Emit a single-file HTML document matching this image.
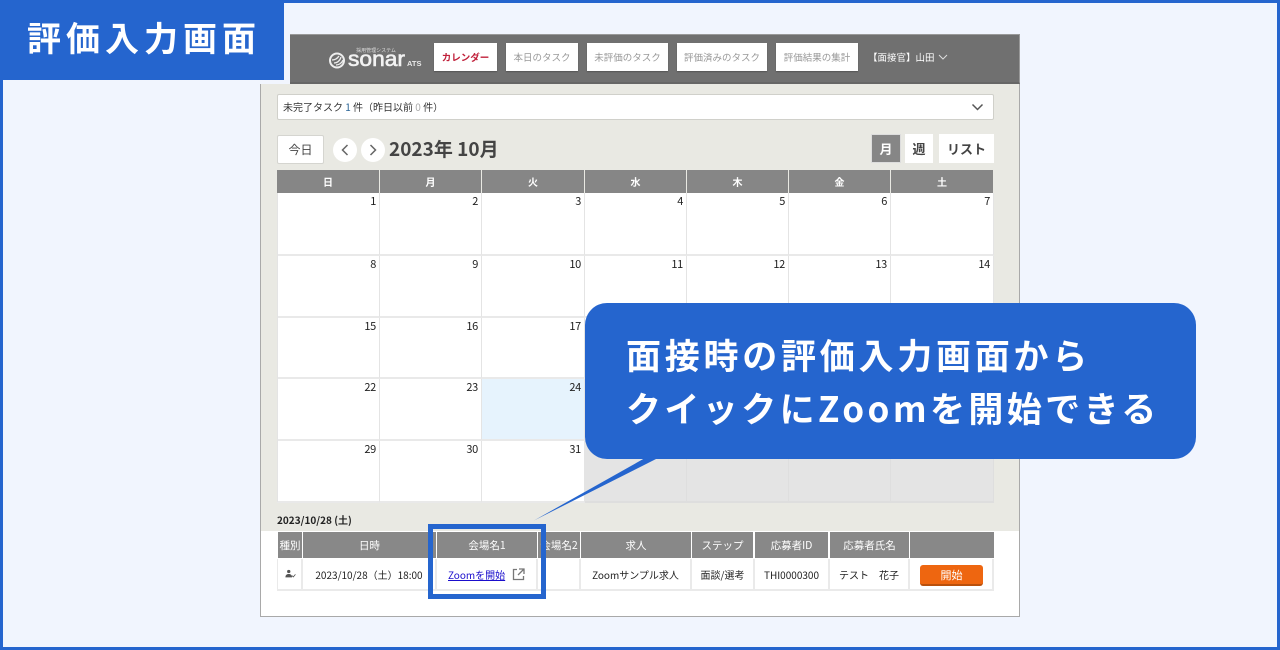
<!DOCTYPE html>
<html lang="ja"><head><meta charset="utf-8"><title>評価入力画面</title>
<style>
*{box-sizing:border-box;margin:0;padding:0}
html,body{width:1280px;height:650px;overflow:hidden}
body{position:relative;background:#F1F5FE;font-family:"Noto Sans CJK JP","Liberation Sans",sans-serif;color:#333}
.a{position:absolute}
.c{display:flex;align-items:center;justify-content:center;white-space:nowrap}
#frame{left:0;top:0;width:1280px;height:650px;border:3px solid #2565CE}
#panel{left:260px;top:84px;width:760px;height:533px;background:#fff;border:1px solid #a9a9a9;border-top:0}
#body{left:261px;top:84px;width:758px;height:447px;background:#E9E9E3}
#head{left:290px;top:34px;width:730px;height:50px;background:#707070;border:1px solid #999;border-width:1px 1px 2px 0;border-bottom-color:#666}
.tab{top:43px;height:28px;background:#fff;font-size:9.500px;color:#999;box-shadow:0 1px 1px #555}
#bar{left:277px;top:94px;width:717px;height:26px;background:#fff;border:1px solid #d0d0ca;border-radius:2px;font-size:10px;line-height:24px;padding-left:5px;color:#333}
.th{top:170px;height:23px;background:#868686;color:#fff;font-size:10px;font-weight:700}
.cell{background:#fff;border-right:1px solid #e4e4e4;border-bottom:2px solid #e9e9e9;text-align:right;font-size:11px;line-height:14px;padding:1px 3px 0 0;color:#222;letter-spacing:-.3px}
.g{background:#E4E4E4;border-color:#dedede}
.h2{top:532px;height:26px;background:#888;color:#fff;font-size:10.500px}
.td{top:559px;height:32px;background:#fff;border-bottom:2px solid #eaeaea;border-right:2px solid #eaeaea;font-size:10px;color:#222}
</style></head><body>
<div class="a" id="panel"></div>
<div class="a" id="body"></div>
<div class="a" id="head"></div>

<svg class="a" style="left:325px;top:44px" width="105" height="30" viewBox="0 0 105 30">
<circle cx="12" cy="16.500" r="7" fill="none" stroke="#eee" stroke-width="2"/>
<path d="M9 19c3 0 6-2 7-6M7 16c3 0 5-1 7-4M11 21c3 0 6-2 7-5" fill="none" stroke="#eee" stroke-width="1.300"/>
<text x="51" y="8" font-size="5" fill="#ddd" text-anchor="middle" font-family="'Noto Sans CJK JP',sans-serif">採用管理システム</text>
<text x="23" y="22" font-size="21" fill="#f2f2f2" stroke="#f2f2f2" stroke-width=".6" textLength="57" lengthAdjust="spacingAndGlyphs" font-family="'Liberation Sans',sans-serif">sonar</text>
<text x="82" y="22" font-size="7.500" font-weight="700" fill="#e8e8e8" font-family="'Liberation Sans',sans-serif">ATS</text>
</svg>

<div class="a c tab" style="left:434px;width:63px;color:#C0203A;font-weight:700">カレンダー</div>
<div class="a c tab" style="left:506px;width:72px">本日のタスク</div>
<div class="a c tab" style="left:587px;width:81px">未評価のタスク</div>
<div class="a c tab" style="left:677px;width:90px">評価済みのタスク</div>
<div class="a c tab" style="left:776px;width:82px">評価結果の集計</div>
<div class="a" style="left:868px;top:50px;font-size:9.500px;line-height:14px;color:#fff;white-space:nowrap">【面接官】山田</div>
<svg class="a" style="left:938px;top:54px" width="10" height="7"><path d="M1 1l4 4 4-4" fill="none" stroke="#ddd" stroke-width="1"/></svg>

<div class="a" id="bar">未完了タスク <span style="color:#2a6496">1</span> 件（昨日以前 <span style="color:#aaa">0</span> 件）</div>
<svg class="a" style="left:971px;top:103px" width="13" height="9"><path d="M1.500 1.500l5 5 5-5" fill="none" stroke="#555" stroke-width="1.500"/></svg>

<div class="a c" style="left:277px;top:135px;width:47px;height:29px;background:#fff;border:1px solid #d5d5d0;border-radius:2px;font-size:12px;color:#444">今日</div>
<div class="a" style="left:333px;top:138px;width:24px;height:24px;border-radius:50%;background:#fff"></div>
<div class="a" style="left:361px;top:138px;width:24px;height:24px;border-radius:50%;background:#fff"></div>
<svg class="a" style="left:333px;top:138px" width="52" height="24"><path d="M14.500 7l-5 5 5 5M37.500 7l5 5-5 5" fill="none" stroke="#666" stroke-width="1.500"/></svg>
<div class="a" style="left:389px;top:134px;font-size:19px;line-height:29px;font-weight:700;color:#444;white-space:nowrap">2023年 10月</div>
<div class="a c" style="left:871px;top:134px;width:30px;height:29px;background:#868686;color:#fff;font-size:13px;font-weight:700;border:1px solid #ddd">月</div>
<div class="a c" style="left:905px;top:134px;width:28px;height:29px;background:#fff;color:#444;font-size:13px;font-weight:700">週</div>
<div class="a c" style="left:939px;top:134px;width:55px;height:29px;background:#fff;color:#444;font-size:13px;font-weight:700">リスト</div>

<div class="a c th" style="left:277px;width:102px">日</div>
<div class="a c th" style="left:380px;width:101px">月</div>
<div class="a c th" style="left:482px;width:102px">火</div>
<div class="a c th" style="left:585px;width:101px">水</div>
<div class="a c th" style="left:687px;width:101px">木</div>
<div class="a c th" style="left:789px;width:101px">金</div>
<div class="a c th" style="left:891px;width:102px">土</div>

<div class="a" style="left:277px;top:193px;width:717px;height:310px;display:grid;grid-template-columns:103px 102px 103px 102px 102px 102px 103px;grid-template-rows:63px 62px 61px 62px 62px;">
<div class="cell">1</div><div class="cell">2</div><div class="cell">3</div><div class="cell">4</div><div class="cell">5</div><div class="cell">6</div><div class="cell">7</div>
<div class="cell">8</div><div class="cell">9</div><div class="cell">10</div><div class="cell">11</div><div class="cell">12</div><div class="cell">13</div><div class="cell">14</div>
<div class="cell">15</div><div class="cell">16</div><div class="cell">17</div><div class="cell"></div><div class="cell"></div><div class="cell"></div><div class="cell"></div>
<div class="cell">22</div><div class="cell">23</div><div class="cell" style="background:#E6F3FD">24</div><div class="cell"></div><div class="cell"></div><div class="cell"></div><div class="cell"></div>
<div class="cell">29</div><div class="cell">30</div><div class="cell">31</div><div class="cell g"></div><div class="cell g"></div><div class="cell g"></div><div class="cell g"></div>
</div>
<div class="a" style="left:277px;top:193px;width:1px;height:309px;background:#e4e4e4"></div>

<div class="a" style="left:277px;top:512px;font-size:10px;line-height:16px;font-weight:700;color:#222;white-space:nowrap">2023/10/28 (土)</div>

<div class="a c h2" style="left:278px;width:24px">種別</div>
<div class="a c h2" style="left:303px;width:133px">日時</div>
<div class="a c h2" style="left:437px;width:100px">会場名1</div>
<div class="a c h2" style="left:538px;width:42px">会場名2</div>
<div class="a c h2" style="left:581px;width:110px">求人</div>
<div class="a c h2" style="left:692px;width:61px">ステップ</div>
<div class="a c h2" style="left:755px;width:73px">応募者ID</div>
<div class="a c h2" style="left:830px;width:79px">応募者氏名</div>
<div class="a c h2" style="left:910px;width:84px"></div>

<div class="a c td" style="left:277px;width:26px;border-left:1px solid #eaeaea"><svg width="12" height="10" viewBox="0 0 14 12"><circle cx="5.500" cy="3" r="2" fill="#555"/><path d="M1.500 10c0-3 2-4 4-4s4 1 4 4z" fill="#555"/><path d="M9.500 8l1.500 1.500 2.500-3" fill="none" stroke="#555"/></svg></div>
<div class="a c td" style="left:303px;width:134px">2023/10/28（土）18:00</div>
<div class="a td" style="left:437px;width:101px"></div>
<div class="a" style="left:448px;top:567px;font-size:10px;line-height:15px;color:#1a0dcc;text-decoration:underline;white-space:nowrap">Zoomを開始</div>
<svg class="a" style="left:512px;top:568px" width="13" height="13" viewBox="0 0 13 13"><path d="M5 1.500H1.500v10h10V8M7 1h5v5M12 1L6 7" fill="none" stroke="#777" stroke-width="1.300"/></svg>
<div class="a td" style="left:538px;width:43px"></div>
<div class="a c td" style="left:581px;width:111px">Zoomサンプル求人</div>
<div class="a c td" style="left:692px;width:63px">面談/選考</div>
<div class="a c td" style="left:755px;width:75px">THI0000300</div>
<div class="a c td" style="left:830px;width:80px">テスト　花子</div>
<div class="a td" style="left:910px;width:84px"></div>
<div class="a c" style="left:920px;top:565px;width:63px;height:21px;background:#EE6610;border-bottom:2px solid #B9500C;border-radius:3px;color:#fff;font-size:11px">開始</div>

<div class="a" style="left:428px;top:524px;width:118px;height:75px;border:5px solid #2565CE"></div>

<svg class="a" style="left:530px;top:450px" width="140" height="75"><polygon points="115,8 128,8 4,70.500" fill="#2565CE"/></svg>
<div class="a" style="left:585px;top:303px;width:611px;height:156px;background:#2565CE;border-radius:22px"></div>
<div class="a" style="left:626px;top:328px;font-size:35px;line-height:53px;font-weight:700;letter-spacing:3.400px;color:#fff;white-space:nowrap"><span style="letter-spacing:3.750px">面接時の評価入力画面から</span><br>クイックにZoomを開始できる</div>

<div class="a" id="frame"></div>
<div class="a c" style="left:0;top:0;width:284px;height:80px;background:#2565CE"></div>
<div class="a" style="left:27px;top:13px;font-size:34px;line-height:48px;font-weight:700;letter-spacing:5px;color:#fff;white-space:nowrap">評価入力画面</div>
</body></html>
